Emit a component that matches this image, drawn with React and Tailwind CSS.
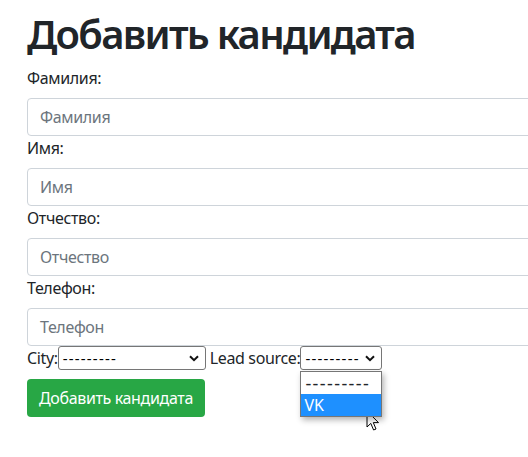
// Add-candidate form (Bootstrap-like), with the lead source select opened.

const FONT = { fontFamily: '"Segoe UI", "Noto Sans", "Open Sans", sans-serif' }

function Field({ label }) {
  return (
    <div className="flex flex-col">
      <label className="text-[16px] leading-6 tracking-[-0.35px] text-[#212529] mb-2">{label}:</label>
      <div className="w-[560px] h-[38px] border border-[#ced4da] rounded-[4px] px-3 flex items-center text-[16px] tracking-[-0.35px] text-[#6c757d] bg-white">
        {label}
      </div>
    </div>
  )
}

function Chevron() {
  return (
    <svg width="10" height="7" viewBox="0 0 10 7" className="shrink-0">
      <path d="M1 1.2 L5 5.2 L9 1.2" fill="none" stroke="#111" strokeWidth="2" />
    </svg>
  )
}

function FakeSelect({ width }) {
  return (
    <div
      className="h-6 border border-[#767676] rounded-[3px] bg-white flex items-center justify-between pl-[4px] pr-[6px] text-[15px] text-black"
      style={{ width }}
    >
      <span className="tracking-[1.2px]">---------</span>
      <Chevron />
    </div>
  )
}

function Cursor() {
  return (
    <svg width="14" height="22" viewBox="0 0 14 22" className="absolute left-[366px] top-[410px]">
      <path
        d="M1 1 L1 17 L4.8 13.4 L7.6 20 L10 19 L7.3 12.6 L12.5 12.6 Z"
        fill="#fff"
        stroke="#000"
        strokeWidth="1"
        strokeLinejoin="round"
      />
    </svg>
  )
}

export default function App() {
  return (
    <div className="relative w-[528px] h-[457px] overflow-hidden bg-white text-[#212529]" style={FONT}>
      <div className="pl-[27px] pt-[10px]">
        <h1 className="text-[40px] leading-[48px] font-semibold tracking-[-1.7px] mb-2 text-[#212529]">Добавить кандидата</h1>
        <Field label="Фамилия" />
        <Field label="Имя" />
        <Field label="Отчество" />
        <Field label="Телефон" />

        <div className="flex items-center h-6 text-[16px] leading-6 tracking-[-0.35px]">
          <span>City:</span>
          <FakeSelect width={148} />
          <span className="ml-[4px]">Lead source:</span>
          <div className="relative">
            <FakeSelect width={82} />
            {/* open option list */}
            <div className="absolute left-0 top-[25px] w-[82px] border border-[#767676] bg-white shadow-[2px_3px_6px_rgba(0,0,0,0.3)] z-10">
              <div className="h-[22px] flex items-center pl-[4px] text-[18px] tracking-[1.4px]">---------</div>
              <div className="h-[22px] flex items-center pl-[3px] text-[16px] tracking-normal bg-[#1e90ff] text-white">VK</div>
            </div>
          </div>
        </div>

        <button className="mt-[9px] h-[38px] px-3 rounded-[4px] bg-[#28a745] text-white text-[16px] leading-6 tracking-[-0.35px]">
          Добавить кандидата
        </button>
      </div>
      <Cursor />
    </div>
  )
}
